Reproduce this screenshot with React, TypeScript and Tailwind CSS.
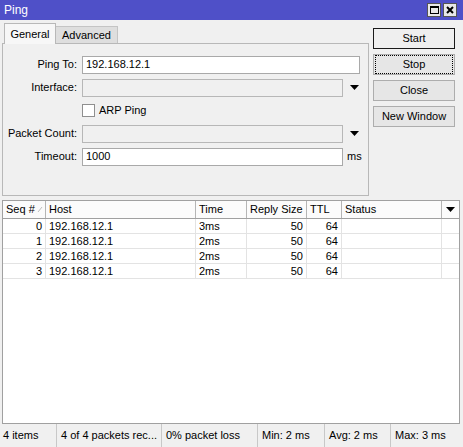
import React from 'react';

const font = { fontFamily: '"Liberation Sans", Arial, sans-serif' };

const rows = [
  { seq: 0, host: '192.168.12.1', time: '3ms', size: 50, ttl: 64 },
  { seq: 1, host: '192.168.12.1', time: '2ms', size: 50, ttl: 64 },
  { seq: 2, host: '192.168.12.1', time: '2ms', size: 50, ttl: 64 },
  { seq: 3, host: '192.168.12.1', time: '2ms', size: 50, ttl: 64 },
];

const Arrow: React.FC = () => (
  <svg width="9" height="5" viewBox="0 0 9 5" className="shrink-0">
    <polygon points="0,0 9,0 4.5,5" fill="#000" />
  </svg>
);

const Field: React.FC<{ label: string; children: React.ReactNode }> = ({ label, children }) => (
  <div className="flex h-[23px] items-center">
    <div className="w-[75px] text-right pr-[1px]">{label}</div>
    <div className="ml-[4px] flex flex-1 items-center">{children}</div>
  </div>
);

const Btn: React.FC<{ label: string; kind?: 'default' | 'focus' }> = ({ label, kind }) => (
  <div
    className={
      'h-[21px] flex items-center justify-center ' +
      (kind === 'default'
        ? 'border border-[#1a1a1a] bg-[#efefef]'
        : 'border border-[#adadad] bg-[#e6e6e6]')
    }
  >
    {kind === 'focus' ? (
      <div className="m-[1px] flex h-full w-full items-center justify-center border border-dotted border-black">
        {label}
      </div>
    ) : (
      label
    )}
  </div>
);

export default function App() {
  return (
    <div className="flex h-[447px] w-[463px] flex-col bg-[#f0f0f0] text-[11px] text-black" style={font}>
      {/* title bar */}
      <div className="flex h-[20px] shrink-0 items-center justify-between bg-[#4f50c8] pl-[4px] pr-[6px]">
        <span className="text-[12px] text-white">Ping</span>
        <div className="flex gap-[2px]">
          <div className="flex h-[14px] w-[14px] items-center justify-center border border-[#555] bg-[#e8e8e8]">
            <div className="h-[8px] w-[9px] border border-black border-t-2" />
          </div>
          <div className="flex h-[14px] w-[14px] items-center justify-center border border-[#555] bg-[#e8e8e8]">
            <svg width="8" height="8" viewBox="0 0 8 8">
              <path d="M1 1 L7 7 M7 1 L1 7" stroke="#000" strokeWidth="2" />
            </svg>
          </div>
        </div>
      </div>

      {/* top area */}
      <div className="flex shrink-0 pl-[2px] pr-[8px]">
        <div className="flex w-[367px] flex-col">
          <div className="flex h-[23px] items-end pl-[2px]">
            <div className="relative z-10 -mb-[1px] flex h-[21px] w-[52px] items-center justify-center border border-b-0 border-[#b8b8b8] bg-[#f7f7f7]">
              General
            </div>
            <div className="flex h-[17px] w-[62px] items-center justify-center border border-b-0 border-l-0 border-[#c4c4c4] bg-[#dedede]">
              Advanced
            </div>
          </div>
          <div className="h-[153px] border border-[#b8b8b8] pt-[9px]">
            <Field label="Ping To:">
              <div className="flex h-[18px] w-[278px] items-center border border-[#a9a9a9] bg-white pl-[3px]">
                192.168.12.1
              </div>
            </Field>
            <Field label="Interface:">
              <div className="h-[18px] w-[261px] border border-[#b7b7b7] bg-[#f0f0f0]" />
              <div className="ml-[7px]">
                <Arrow />
              </div>
            </Field>
            <Field label="">
              <div className="h-[13px] w-[13px] border border-[#8f8f8f] bg-white" />
              <span className="ml-[4px]">ARP Ping</span>
            </Field>
            <Field label="Packet Count:">
              <div className="h-[18px] w-[261px] border border-[#b7b7b7] bg-[#f0f0f0]" />
              <div className="ml-[7px]">
                <Arrow />
              </div>
            </Field>
            <Field label="Timeout:">
              <div className="flex h-[18px] w-[261px] items-center border border-[#a9a9a9] bg-white pl-[3px]">
                1000
              </div>
              <span className="ml-[4px]">ms</span>
            </Field>
          </div>
        </div>
        <div className="ml-[4px] mt-[8px] flex w-[82px] flex-col gap-[5px]">
          <Btn label="Start" kind="default" />
          <Btn label="Stop" kind="focus" />
          <Btn label="Close" />
          <Btn label="New Window" />
        </div>
      </div>

      {/* table */}
      <div className="mt-[4px] ml-[2px] mr-[3px] flex flex-1 flex-col border border-[#a0a0a0] bg-white">
        <div className="flex h-[18px] shrink-0 items-center border-b border-[#a0a0a0] bg-[#fbfbfb]">
          <div className="flex h-full w-[43px] items-center border-r border-[#b5b5b5] pl-[3px]">
            Seq #
            <svg width="6" height="7" viewBox="0 0 6 7" className="ml-[2px]">
              <path d="M1 6 L5 1" stroke="#bdbdbd" strokeWidth="1" />
            </svg>
          </div>
          <div className="flex h-full w-[150px] items-center border-r border-[#b5b5b5] pl-[3px]">Host</div>
          <div className="flex h-full w-[51px] items-center border-r border-[#b5b5b5] pl-[3px]">Time</div>
          <div className="flex h-full w-[60px] items-center border-r border-[#b5b5b5] pl-[3px]">Reply Size</div>
          <div className="flex h-full w-[35px] items-center border-r border-[#b5b5b5] pl-[3px]">TTL</div>
          <div className="flex h-full w-[100px] items-center border-r border-[#b5b5b5] pl-[3px]">Status</div>
          <div className="flex h-full flex-1 items-center justify-center">
            <Arrow />
          </div>
        </div>
        {rows.map((r) => (
          <div key={r.seq} className="flex h-[15px] shrink-0 items-center border-b border-[#e3e3e3]">
            <div className="flex h-full w-[43px] items-center justify-end border-r border-[#e3e3e3] pr-[3px]">{r.seq}</div>
            <div className="flex h-full w-[150px] items-center border-r border-[#e3e3e3] pl-[3px]">{r.host}</div>
            <div className="flex h-full w-[51px] items-center border-r border-[#e3e3e3] pl-[3px]">{r.time}</div>
            <div className="flex h-full w-[60px] items-center justify-end border-r border-[#e3e3e3] pr-[3px]">{r.size}</div>
            <div className="flex h-full w-[35px] items-center justify-end border-r border-[#e3e3e3] pr-[3px]">{r.ttl}</div>
            <div className="h-full w-[100px] border-r border-[#e3e3e3]" />
            <div className="h-full flex-1" />
          </div>
        ))}
      </div>

      {/* status bar */}
      <div className="flex h-[23px] shrink-0 items-center pr-[3px]">
        <div className="flex h-full w-[57px] items-center border-r border-[#c8c8c8] pl-[3px]">4 items</div>
        <div className="flex h-full w-[105px] items-center border-r border-[#c8c8c8] pl-[4px]">4 of 4 packets rec...</div>
        <div className="flex h-full w-[96px] items-center border-r border-[#c8c8c8] pl-[4px]">0% packet loss</div>
        <div className="flex h-full w-[67px] items-center border-r border-[#c8c8c8] pl-[4px]">Min: 2 ms</div>
        <div className="flex h-full w-[66px] items-center border-r border-[#c8c8c8] pl-[4px]">Avg: 2 ms</div>
        <div className="flex h-full flex-1 items-center pl-[4px]">Max: 3 ms</div>
      </div>
    </div>
  );
}
